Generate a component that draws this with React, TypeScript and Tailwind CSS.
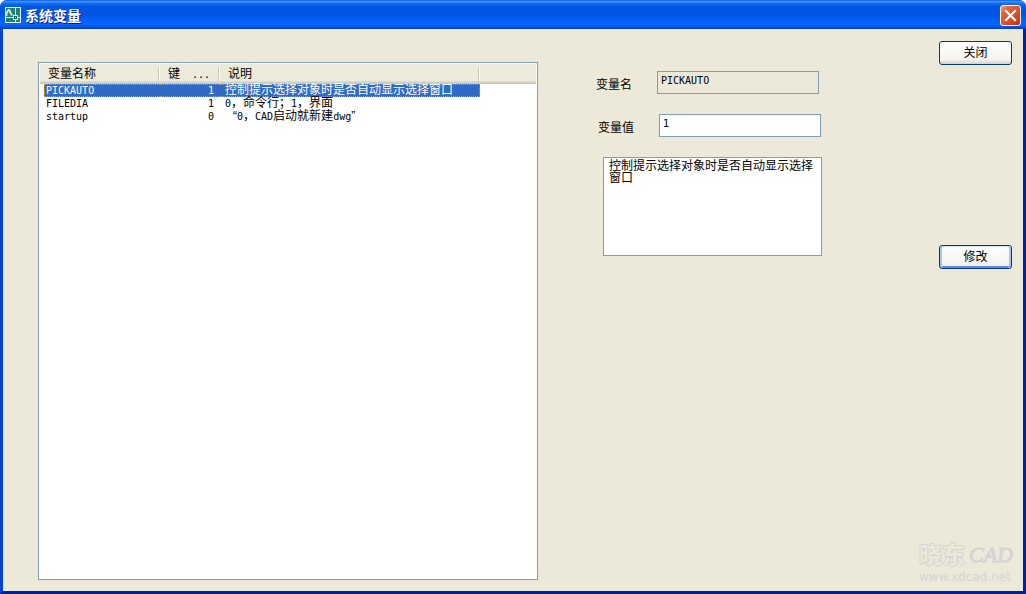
import { useState } from 'react'

type Variable = {
  name: string
  key: string
  note: string
}

const VARIABLES: Variable[] = [
  { name: 'PICKAUTO', key: '1', note: '控制提示选择对象时是否自动显示选择窗口' },
  { name: 'FILEDIA', key: '1', note: '0，命令行；1，界面' },
  { name: 'startup', key: '0', note: '“0，CAD启动就新建dwg”' },
]

// Half-width characters take half the width of a Chinese one, quotes take all of it
function Mixed({ text }: { text: string }) {
  return (
    <>
      {text.split(/([\x21-\x7e]+|[“”])/).map((part, i) => {
        if (i % 2 === 0) return part
        if (part === '“') return <span key={i} className="inline-block w-3 text-right">{part}</span>
        if (part === '”') return <span key={i} className="inline-block w-3">{part}</span>
        return (
          <span key={i} className="font-['DejaVu_Sans_Mono','Liberation_Mono',monospace] text-[10px]">
            {part}
          </span>
        )
      })}
    </>
  )
}

function AppIcon() {
  return (
    <svg width="16" height="16" viewBox="0 0 16 16" aria-hidden="true">
      <rect width="16" height="16" fill="#e4f2ee" />
      <rect x="1" y="1" width="14" height="14" fill="#1f8278" />
      <path d="M1.5 9V6.5L3 3.5C4.5 2 5 4 5.5 6L7 8.5" fill="none" stroke="#d4eae4" strokeWidth="1.8" />
      <rect x="10" y="1" width="1" height="14" fill="#d4eae4" />
      <rect x="1" y="10" width="14" height="1" fill="#d4eae4" />
      <rect x="8" y="8" width="5" height="5" fill="#e4f2ee" />
      <rect x="9" y="9" width="3" height="3" fill="#0c5c54" />
      <rect x="10" y="10" width="1" height="1" fill="#e4f2ee" />
    </svg>
  )
}

export default function App() {
  const [selected, setSelected] = useState(0)
  const [value, setValue] = useState(VARIABLES[0].key)

  const current = VARIABLES[selected]

  const handleSelect = (index: number) => {
    setSelected(index)
    setValue(VARIABLES[index].key)
  }

  return (
    <div className="flex min-h-screen flex-col overflow-hidden rounded-t-[7px] bg-[#0842d8] font-['Liberation_Sans','Noto_Sans_CJK_SC',sans-serif] text-xs text-black">
      {/* Title bar */}
      <header className="flex h-[29px] shrink-0 items-center gap-1 bg-[linear-gradient(to_bottom,#0958d8_0%,#3a93ff_5%,#1470f0_12%,#0258e4_22%,#0054e3_50%,#0562fa_75%,#0466ff_86%,#0350d8_94%,#023dba_100%)] pt-px pr-[5px] pl-[5px]">
        <AppIcon />
        <h1 className="flex-1 font-['Noto_Sans_CJK_SC',sans-serif] text-sm leading-5 font-bold text-white [text-shadow:1px_1px_0_#0a1883]">
          系统变量
        </h1>
        <button
          type="button"
          aria-label="关闭窗口"
          className="flex size-[21px] items-center justify-center rounded-[3px] border border-white bg-[linear-gradient(135deg,#f0a088_0%,#e5603c_25%,#dd4a22_65%,#b83010_100%)]"
        >
          <svg width="13" height="13" viewBox="0 0 13 13" aria-hidden="true">
            <path d="M2 2l9 9M11 2l-9 9" stroke="#ffffff" strokeWidth="2.2" strokeLinecap="square" />
          </svg>
        </button>
      </header>

      <main className="flex flex-1 border-x-[3px] border-b-[3px] border-t-0 border-r-[#0020a8] border-b-[#001ea0] border-l-[#0842d8] bg-[#ece9d8] pr-[11px] pl-[35px]">
        {/* Variable list */}
        <section className="mt-[33px] mb-[11px] min-w-0 flex-1 border border-[#7f9db9] bg-white p-px">
          <table className="w-full table-fixed border-separate border-spacing-0">
            <colgroup>
              <col className="w-[120px]" />
              <col className="w-[60px]" />
              <col className="w-[260px]" />
              <col />
            </colgroup>
            <thead>
              <tr className="h-5 bg-[linear-gradient(to_bottom,#ebeadb_0%,#ebeadb_84%,#d6d2c2_90%,#cbc7b8_100%)] text-left">
                <th className="p-0 font-normal">
                  <span className="mr-px flex h-[14px] items-center border-r border-[#c7c5b2] pl-2 whitespace-pre shadow-[1px_0_0_#ffffff]">
                    变量名称
                  </span>
                </th>
                <th className="p-0 font-normal">
                  <span className="mr-px flex h-[14px] items-center border-r border-[#c7c5b2] pl-2 whitespace-pre shadow-[1px_0_0_#ffffff]">
                    键<span className="pl-3"><Mixed text="..." /></span>
                  </span>
                </th>
                <th className="p-0 font-normal">
                  <span className="mr-px flex h-[14px] items-center border-r border-[#c7c5b2] pl-2 shadow-[1px_0_0_#ffffff]">
                    说明
                  </span>
                </th>
                <td className="p-0" />
              </tr>
            </thead>
            <tbody>
              {VARIABLES.map((v, i) => (
                <tr
                  key={v.name}
                  onClick={() => handleSelect(i)}
                  className={`cursor-default leading-[11px] ${i === selected ? 'text-white' : 'text-black'}`}
                >
                  <td className="p-0 pl-1">
                    <div
                      className={`h-[13px] border-y border-l border-dotted pl-px ${
                        i === selected ? 'border-[#ce953a] bg-[#316ac5]' : 'border-transparent'
                      }`}
                    >
                      <Mixed text={v.name} />
                    </div>
                  </td>
                  <td className="p-0">
                    <div
                      className={`h-[13px] border-y border-dotted pr-1.5 text-right ${
                        i === selected ? 'border-[#ce953a] bg-[#316ac5]' : 'border-transparent'
                      }`}
                    >
                      <Mixed text={v.key} />
                    </div>
                  </td>
                  <td className="p-0">
                    <div
                      className={`h-[13px] border-y border-r border-dotted pl-[5px] whitespace-nowrap ${
                        i === selected ? 'border-[#ce953a] bg-[#316ac5]' : 'border-transparent'
                      }`}
                    >
                      <Mixed text={v.note} />
                    </div>
                  </td>
                  <td className="p-0" />
                </tr>
              ))}
            </tbody>
          </table>
        </section>

        {/* Selected variable */}
        <form id="variable" className="mt-[42px] ml-[58px] w-[226px] shrink-0" onSubmit={(e) => e.preventDefault()}>
          <div className="flex items-center">
            <label htmlFor="name" className="w-[61px] pt-1">
              变量名
            </label>
            <input
              id="name"
              readOnly
              value={current.name}
              className="h-[23px] w-[162px] border border-[#7f9db9] bg-[#ece9d8] px-[3px] pb-1 font-['DejaVu_Sans_Mono',monospace] text-[10px] outline-none"
            />
          </div>
          <div className="mt-5 flex items-center pl-0.5">
            <label htmlFor="value" className="w-[61px] pt-1">
              变量值
            </label>
            <input
              id="value"
              value={value}
              onChange={(e) => setValue(e.target.value)}
              className="h-[23px] w-[162px] border border-[#7f9db9] bg-white px-[3px] pb-1 font-['DejaVu_Sans_Mono',monospace] text-[10px] outline-none"
            />
          </div>
          <textarea
            aria-label="说明"
            readOnly
            value={current.note}
            className="mt-5 ml-[7px] block h-[99px] w-[219px] resize-none border border-[#7f9db9] bg-white px-[5px] py-0.5 leading-3 outline-none"
          />
        </form>

        {/* Actions */}
        <aside className="ml-[97px] flex w-[93px] shrink-0 flex-col items-end pt-3">
          <button
            type="button"
            className="h-6 w-[73px] rounded-[3px] border border-[#003c74] bg-[linear-gradient(to_bottom,#ffffff_0%,#f4f3ee_80%,#d8d0c4_100%)]"
          >
            关闭
          </button>
          <button
            type="submit"
            form="variable"
            className="mt-[180px] h-6 w-[73px] rounded-[3px] border border-[#003c74] bg-[linear-gradient(to_bottom,#ffffff_0%,#f0f0ea_100%)] shadow-[inset_0_1px_0_#cee7ff,inset_2px_0_0_#a9c2f0,inset_-2px_0_0_#a9c2f0,inset_0_-2px_0_#6982ee]"
          >
            修改
          </button>
          <div className="mt-auto w-full pb-1 whitespace-nowrap text-[#d4d4d4]">
            <div className="flex h-6 items-center gap-1 leading-6">
              <span className="text-[23px] font-bold text-[#ece9d8] [-webkit-text-stroke:2px_#d4d4d4] [paint-order:stroke_fill]">
                晓东
              </span>
              <span className="font-['Liberation_Serif',serif] text-[22px] italic [-webkit-text-stroke:1px_#d4d4d4]">
                CAD
              </span>
            </div>
            <div className="font-['DejaVu_Sans',sans-serif] text-xs leading-5">www.xdcad.net</div>
          </div>
        </aside>
      </main>
    </div>
  )
}
